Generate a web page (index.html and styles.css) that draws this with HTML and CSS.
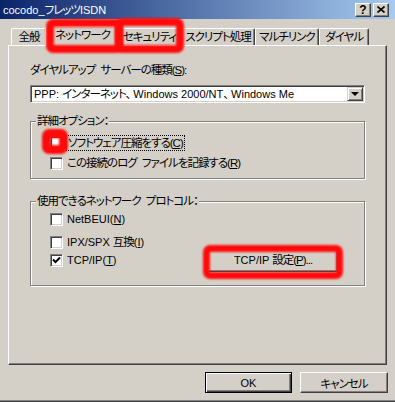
FILE: index.html
```html
<!DOCTYPE html>
<html lang="ja">
<head>
    <meta charset="UTF-8">
    <title>cocodo_フレッツISDN</title>
    <link rel="stylesheet" href="styles.css">
</head>
<body>
    <div class="window">
        <div class="titlebar">
            <span class="title en">cocodo_<span class="ja">フレッツ</span>ISDN</span>
            <div class="caption-btns">
                <span class="cap-btn help">?</span>
                <span class="cap-btn">
                    <svg width="8" height="7" viewBox="0 0 8 7"><path d="M0.5 0.5 L7.5 6.5 M7.5 0.5 L0.5 6.5" stroke="#000" stroke-width="1.6"/></svg>
                </span>
            </div>
        </div>

        <div class="tabs">
            <div class="tab" style="width: 36px">全般</div>
            <div class="tab active" style="width: 75px">ネットワーク</div>
            <div class="tab" style="width: 63px">セキュリティ</div>
            <div class="tab" style="width: 74px">スクリプト処理</div>
            <div class="tab" style="width: 64px">マルチリンク</div>
            <div class="tab" style="width: 50px">ダイヤル</div>
        </div>

        <div class="panel">
            <div class="field-label">ダイヤルアップ サーバーの種類(<u>S</u>):</div>
            <div class="combo">
                <span class="combo-text en">PPP: <span class="ja">インターネット、</span> Windows 2000/NT<span class="ja">、</span> Windows Me</span>
                <span class="combo-btn"><span class="arrow"></span></span>
            </div>

            <fieldset class="group first">
                <legend>詳細オプション：</legend>
                <div class="group-body">
                    <label class="row">
                        <span class="check"></span>
                        <span class="focus">ソフトウェア圧縮をする(<u>C</u>)</span>
                    </label>
                    <label class="row">
                        <span class="check"></span>
                        <span>この接続のログ ファイルを記録する(<u>R</u>)</span>
                    </label>
                </div>
            </fieldset>

            <fieldset class="group second">
                <legend>使用できるネットワーク プロトコル：</legend>
                <div class="group-body proto">
                    <label class="row">
                        <span class="check"></span>
                        <span class="en">NetBEUI(<u>N</u>)</span>
                    </label>
                    <label class="row">
                        <span class="check"></span>
                        <span class="en">IPX/SPX <span class="ja">互換</span>(<u>I</u>)</span>
                    </label>
                    <div class="row tcp-row">
                        <span class="check">
                            <svg width="9" height="9" viewBox="0 0 9 9"><path d="M1 3.5 L3.5 6 L8 1.5" fill="none" stroke="#000" stroke-width="2"/></svg>
                        </span>
                        <span class="en">TCP/IP(<u>T</u>)</span>
                        <button class="btn settings"><span class="en">TCP/IP </span>設定(<u>P</u>)...</button>
                    </div>
                </div>
            </fieldset>
        </div>

        <div class="actions">
            <button class="btn default en">OK</button>
            <button class="btn">キャンセル</button>
        </div>
        <div class="frame-bottom"></div>

        <!-- 注釈の赤枠 -->
        <div class="mark mark-tab1"></div>
        <div class="mark mark-tab2"></div>
        <div class="mark mark-check"></div>
        <div class="mark mark-btn"></div>
    </div>
</body>
</html>
```

FILE: styles.css
```css
body {
    margin: 0;
    background: #d4d0c8;
    font-family: "Liberation Sans", "Noto Sans CJK JP", sans-serif;
    font-size: 11.5px;
    font-feature-settings: "palt";
    letter-spacing: -1px;
    word-spacing: 3px;
    color: #000;
}

/* 英数字はそのままの字間 */
.en {
    font-size: 11px;
    letter-spacing: 0;
    word-spacing: 0;
}

.en .ja {
    font-size: 11.5px;
    letter-spacing: -1px;
}

u {
    text-decoration: underline;
    text-underline-offset: 1px;
}

.window {
    position: relative;
    width: 395px;
    height: 402px;
    display: flex;
    flex-direction: column;
    overflow: hidden;
}

.titlebar {
    height: 19px;
    display: flex;
    align-items: center;
    justify-content: space-between;
    padding-left: 3px;
    background: linear-gradient(to right, #0a246a, #a6caf0);
}

.title {
    color: #fff;
    line-height: 14px;
}

.caption-btns {
    display: flex;
    gap: 2px;
    margin-right: 6px;
}

.cap-btn {
    width: 14px;
    height: 12px;
    display: flex;
    align-items: center;
    justify-content: center;
    background: #d4d0c8;
    border: 1px solid;
    border-color: #fff #404040 #404040 #fff;
    box-shadow: inset -1px -1px #808080;
}

.cap-btn.help {
    font-weight: bold;
    font-size: 12px;
    line-height: 12px;
    letter-spacing: 0;
}

.tabs {
    display: flex;
    align-items: flex-end;
    height: 20px;
    margin-top: 7px;
    margin-bottom: -1px;
    padding-left: 11px;
    position: relative;
    z-index: 1;
}

.tab {
    box-sizing: border-box;
    height: 17px;
    margin-bottom: 1px;
    border-left: 1px solid #fff;
    border-top: 1px solid #fff;
    border-right: 1px solid #404040;
    border-radius: 2px 2px 0 0;
    box-shadow: inset -1px 0 #808080;
    text-align: center;
    line-height: 16px;
    white-space: nowrap;
    background: #d4d0c8;
}

.tab.active {
    height: 20px;
    margin: 0 -2px;
    line-height: 16px;
}

.panel {
    box-sizing: border-box;
    width: 379px;
    height: 320px;
    margin-left: 8px;
    padding: 17px 21px 0;
    border: 1px solid;
    border-color: #fff #404040 #404040 #fff;
    box-shadow: inset -1px -1px #808080;
}

.field-label {
    line-height: 14px;
    height: 14px;
}

.combo {
    box-sizing: border-box;
    height: 18px;
    margin-top: 8px;
    display: flex;
    align-items: center;
    background: #fff;
    border: 1px solid;
    border-color: #808080 #fff #fff #808080;
    box-shadow: inset 1px 1px #404040, inset -1px -1px #d4d0c8;
}

.combo-text {
    flex: 1;
    padding-left: 3px;
    line-height: 14px;
    white-space: nowrap;
}

.combo-btn {
    box-sizing: border-box;
    width: 16px;
    height: 14px;
    margin-right: 1px;
    display: flex;
    align-items: center;
    justify-content: center;
    background: #d4d0c8;
    border: 1px solid;
    border-color: #d4d0c8 #404040 #404040 #d4d0c8;
    box-shadow: inset 1px 1px #fff, inset -1px -1px #808080;
}

.arrow {
    width: 0;
    height: 0;
    border-left: 4px solid transparent;
    border-right: 4px solid transparent;
    border-top: 4px solid #000;
}

.group {
    margin: 11px 0 0;
    padding: 0;
    border: 1px solid #808080;
    box-shadow: inset 1px 1px #fff, 1px 1px #fff;
    min-width: 0;
}

.group.second {
    margin-top: 15px;
}

.group legend {
    margin-left: 5px;
    padding: 0 1px;
    line-height: 14px;
    background: #d4d0c8;
}

.group-body {
    display: flex;
    flex-direction: column;
    gap: 8px;
    padding: 8px 0 8px 19px;
}

.group-body.proto {
    padding: 5px 26px 13px 19px;
    gap: 0;
}

.proto .row:nth-child(2) {
    margin-top: 10px;
}

.row {
    display: flex;
    align-items: center;
    height: 13px;
    gap: 4px;
    line-height: 13px;
    white-space: nowrap;
}

.row.tcp-row {
    height: 23px;
}

.check {
    box-sizing: border-box;
    width: 13px;
    height: 13px;
    flex: none;
    display: flex;
    align-items: center;
    justify-content: center;
    background: #fff;
    border: 1px solid;
    border-color: #808080 #fff #fff #808080;
    box-shadow: inset 1px 1px #404040, inset -1px -1px #d4d0c8;
}

.focus {
    outline: 1px dotted #000;
    padding: 0 1px;
    line-height: 14px;
}

.btn {
    box-sizing: border-box;
    height: 21px;
    padding: 0;
    font: inherit;
    font-feature-settings: "palt";
    letter-spacing: -1px;
    color: #000;
    background: #d4d0c8;
    border: 1px solid;
    border-color: #fff #404040 #404040 #fff;
    box-shadow: inset -1px -1px #808080;
}

.btn.en {
    font-size: 11px;
    letter-spacing: 0;
}

.btn.settings {
    width: 130px;
    height: 23px;
    margin-left: auto;
}

.actions {
    display: flex;
    justify-content: flex-end;
    gap: 8px;
    margin-top: 7px;
    padding-right: 7px;
}

.actions .btn {
    width: 88px;
}

.btn.default {
    width: 87px;
    border: 1px solid #000;
    box-shadow: inset 1px 1px #fff, inset -1px -1px #404040, inset -2px -2px #808080;
}

.frame-bottom {
    margin-top: auto;
    height: 1px;
    border-top: 1px solid #808080;
    background: #404040;
}

.mark {
    position: absolute;
    box-sizing: border-box;
    border: 8px solid #ff0a0a;
    border-radius: 7px;
    filter: blur(0.8px);
    z-index: 5;
}

.mark-tab1 {
    left: 46px;
    top: 19px;
    width: 77px;
    height: 34px;
}

.mark-tab2 {
    left: 115px;
    top: 18px;
    width: 69px;
    height: 35px;
}

.mark-check {
    left: 42px;
    top: 129px;
    width: 26px;
    height: 25px;
    border-width: 9px;
}

.mark-btn {
    left: 203px;
    top: 245px;
    width: 140px;
    height: 34px;
    border-width: 7px;
}
```
